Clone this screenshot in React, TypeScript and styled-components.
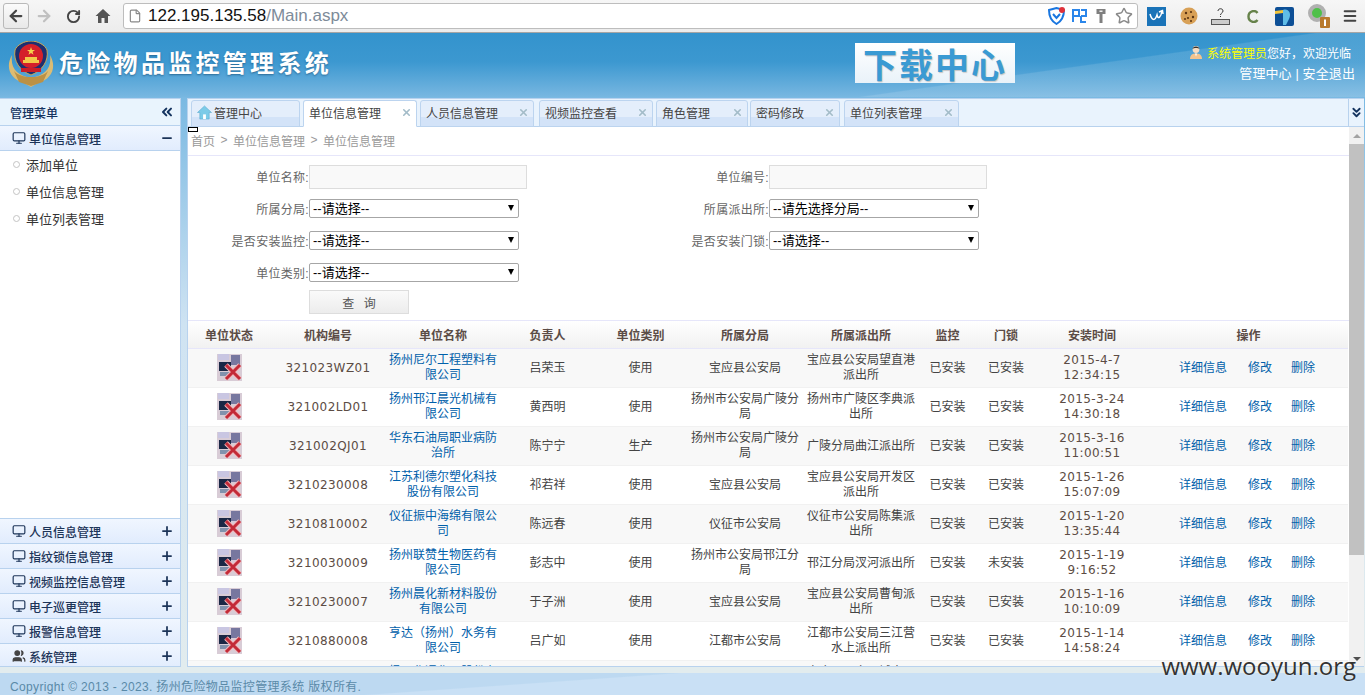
//#########
// Imports
//#########
import * as React from 'react';

import styled, { createGlobalStyle } from 'styled-components';
import {
  ArrowLeft,
  ArrowRight,
  ChevronsDown,
  ChevronsLeft,
  File,
  Menu,
  Minus,
  Monitor,
  Plus,
  RotateCw,
  Star,
  Users,
  X,
} from 'lucide-react';

//#######
// Style
//#######
const GlobalStyle = createGlobalStyle`
  html, body {
    margin: 0;
    padding: 0;
    height: 100%;
    overflow: hidden;
    font-family: "Liberation Sans", "Noto Sans CJK SC", sans-serif;
    font-size: 12px;
    color: #333;
  }
`;

const Page = styled.div`
  position: relative;
  width: 1365px;
  height: 695px;
  display: flex;
  flex-direction: column;
  overflow: hidden;
`;

const BrowserBar = styled.div`
  height: 32px;
  display: flex;
  align-items: center;
  background: linear-gradient(#f6f6f6, #ececec);
  border-bottom: 1px solid #a5a5a5;
  flex: none;
`;

const NavButton = styled.div<{ $boxed?: boolean; $width?: number }>`
  width: ${(props) => props.$width ?? 30}px;
  height: 26px;
  display: flex;
  align-items: center;
  justify-content: center;
  box-sizing: border-box;
  margin-left: ${(props) => (props.$boxed ? 3 : 0)}px;
  border: ${(props) => (props.$boxed ? '1px solid #b9b9b9' : 'none')};
  border-radius: 3px;
  background: ${(props) => (props.$boxed ? 'linear-gradient(#fbfbfb, #e8e8e8)' : 'none')};
`;

const AddressBar = styled.div`
  width: 1015px;
  height: 26px;
  margin-left: 4px;
  padding: 0 4px;
  box-sizing: border-box;
  display: flex;
  align-items: center;
  background: #fff;
  border: 1px solid #bdbdbd;
  border-radius: 3px;
  flex: none;
`;

const UrlHost = styled.span`
  margin-left: 6px;
  font-size: 17px;
  color: #111;
`;

const UrlPath = styled.span`
  font-size: 17px;
  color: #7d8b99;
  flex: 1;
`;

const AddressIcons = styled.div`
  display: flex;
  align-items: center;
  gap: 7px;
`;

const Extensions = styled.div`
  display: flex;
  align-items: center;
  margin-left: 9px;
`;

const ExtensionSlot = styled.div<{ $width: number }>`
  width: ${(props) => props.$width}px;
  display: flex;
  align-items: center;
`;

const TopHeader = styled.header`
  height: 64px;
  flex: none;
  display: flex;
  background:
    linear-gradient(172deg, transparent 72%, rgba(255, 255, 255, 0.12) 72.5%),
    linear-gradient(#3393cd, #3c98d0 45%, #78b7e1);
`;

const Brand = styled.div`
  width: 855px;
  display: flex;
  align-items: center;
  padding: 0 0 3px 8px;
  box-sizing: border-box;
  flex: none;
`;

const BrandTitle = styled.h1`
  margin: 0 0 4px 5px;
  color: #fff;
  font-size: 24px;
  font-weight: 700;
  letter-spacing: 3.3px;
  text-shadow: 0 1px 2px rgba(20, 70, 110, 0.6);
`;

const DownloadBox = styled.div`
  width: 160px;
  height: 40px;
  margin-top: 10px;
  display: flex;
  align-items: center;
  justify-content: center;
  background: linear-gradient(#fff, #e9f2f9);
  color: #3a9ad3;
  font-size: 34px;
  font-weight: 700;
  letter-spacing: 2px;
  text-shadow: 1px 1px 1px #c5c5c5;
  flex: none;
`;

const UserBox = styled.div`
  margin-left: auto;
  padding: 11px 10px 0 0;
  color: #fff;
  text-align: right;
`;

const Greeting = styled.div`
  display: flex;
  align-items: center;
  justify-content: flex-end;
  gap: 4px;
  padding-right: 4px;
  height: 16px;
`;

const Admin = styled.span`
  color: #ff0;
`;

const UserLinks = styled.div`
  margin-top: 3px;
  font-size: 13px;
  letter-spacing: 0.1px;
`;

const Main = styled.div`
  height: 570px;
  flex: none;
  display: flex;
  background: linear-gradient(#7ab9e2, #cfe3f2 40%, #e2ecee);
  padding-top: 1px;
  box-sizing: border-box;
`;

const Sidebar = styled.aside`
  width: 181px;
  flex: none;
  display: flex;
  flex-direction: column;
  overflow: hidden;
  box-sizing: border-box;
  background: #fff;
  border: 1px solid #b8d2ee;
  border-left: none;
`;

const SideTitle = styled.div`
  height: 26px;
  flex: none;
  display: flex;
  align-items: center;
  justify-content: space-between;
  padding: 0 5px 0 10px;
  background: #e9f4fd;
  color: #14335f;
  font-weight: 500;
  border-bottom: 1px solid #b8d2ee;
`;

const SideHead = styled.div`
  height: 25px;
  flex: none;
  box-sizing: border-box;
  display: flex;
  align-items: center;
  padding: 0 6px 0 12px;
  gap: 3px;
  background: linear-gradient(#f0f6ff, #e1ecfd);
  border-bottom: 1px solid #b8d2ee;
  color: #1c3458;
  font-weight: 500;
`;

const SideHeadText = styled.span`
  flex: 1;
`;

const SideList = styled.ul`
  height: 368px;
  flex: none;
  margin: 0;
  padding: 0;
  list-style: none;
  box-sizing: border-box;
  border-bottom: 1px solid #b8d2ee;
`;

const SideItem = styled.li`
  height: 27px;
  display: flex;
  align-items: center;
  padding-left: 13px;
  gap: 6px;
  font-size: 13px;
  color: #333;
`;

const Bullet = styled.i`
  width: 5px;
  height: 5px;
  border: 1px solid #c4c4c4;
  border-radius: 50%;
`;

const Content = styled.section`
  position: relative;
  width: 1177px;
  margin-left: 6px;
  flex: none;
  display: flex;
  flex-direction: column;
  overflow: hidden;
  box-sizing: border-box;
  background: #fff;
  border-left: 1px solid #b8d2ee;
  border-bottom: 1px solid #b8d2ee;
`;

const FocusMark = styled.i`
  position: absolute;
  left: 0;
  top: 29px;
  width: 8px;
  height: 3px;
  background: #fff;
  border: 1px solid #000;
`;

const TabBar = styled.div`
  height: 29px;
  flex: none;
  box-sizing: border-box;
  display: flex;
  align-items: flex-end;
  background: #e9f3fd;
  border-top: 1px solid #b8d2ee;
  border-bottom: 1px solid #b8d2ee;
  padding-left: 3px;
`;

const Tab = styled.div<{ $active?: boolean; $width: number; $gap?: number }>`
  position: relative;
  top: 1px;
  width: ${(props) => props.$width}px;
  margin-right: ${(props) => props.$gap ?? 3}px;
  height: 27px;
  box-sizing: border-box;
  display: flex;
  align-items: center;
  padding: 0 4px 2px 5px;
  gap: 2px;
  color: #444;
  background: ${(props) =>
    props.$active ? '#fff' : 'linear-gradient(#e4eefb 62%, #d3e3f8 62%)'};
  border: 1px solid #bcd4ef;
  border-bottom-color: ${(props) => (props.$active ? '#fff' : '#bcd4ef')};
  border-radius: 3px 3px 0 0;
`;

const TabText = styled.span`
  flex: 1;
`;

const TabCollapse = styled.div`
  margin-left: auto;
  align-self: stretch;
  width: 15px;
  display: flex;
  align-items: center;
  justify-content: center;
  border-left: 1px solid #b8d2ee;
  color: #14335f;
`;

const Body = styled.div`
  flex: 1;
  min-height: 0;
  display: flex;
`;

const Scroller = styled.div`
  flex: 1;
  min-width: 0;
  overflow: hidden;
`;

const ScrollTrack = styled.div`
  width: 15px;
  flex: none;
  display: flex;
  flex-direction: column;
  background: #f1f1f1;
`;

const ScrollArrow = styled.div<{ $down?: boolean }>`
  height: ${(props) => (props.$down ? 14 : 17)}px;
  margin-top: ${(props) => (props.$down ? 'auto' : 0)};
  flex: none;
  display: flex;
  align-items: center;
  justify-content: center;
  &::before {
    content: '';
    border-left: 4px solid transparent;
    border-right: 4px solid transparent;
    border-top: ${(props) => (props.$down ? '4px solid #505050' : 'none')};
    border-bottom: ${(props) => (props.$down ? 'none' : '4px solid #a3a3a3')};
  }
`;

const ScrollThumb = styled.div`
  height: 411px;
  background: #c1c1c1;
`;

const Breadcrumb = styled.div`
  height: 29px;
  box-sizing: border-box;
  display: flex;
  align-items: center;
  gap: 5px;
  padding: 0 0 2px 3px;
  color: #999;
  border-bottom: 1px solid #e6e6fa;
`;

const CrumbArrow = styled.span`
  width: 8px;
  text-align: center;
`;

const SearchForm = styled.form`
  display: grid;
  grid-template-columns: 121px 339px 121px 1fr;
  grid-auto-rows: 32px;
  padding-top: 4px;
  height: 165px;
  box-sizing: border-box;
  border-bottom: 1px solid #e6e6fa;
  align-items: center;
`;

const FieldLabel = styled.label`
  text-align: right;
  color: #666;
  letter-spacing: 0.3px;
`;

const TextInput = styled.input`
  width: 218px;
  height: 24px;
  margin-top: 2px;
  box-sizing: border-box;
  background: #f9f9f9;
  border: 1px solid #ddd;
`;

const SelectBox = styled.div`
  position: relative;
  width: 210px;
  height: 19px;
  &::after {
    content: '';
    position: absolute;
    right: 5px;
    top: 6px;
    border-left: 3.5px solid transparent;
    border-right: 3.5px solid transparent;
    border-top: 6px solid #000;
    pointer-events: none;
  }
`;

const NativeSelect = styled.select`
  appearance: none;
  width: 100%;
  height: 100%;
  box-sizing: border-box;
  padding: 0 0 0 3px;
  background: #fff;
  border: 1px solid #a6a6a6;
  border-radius: 2px;
  font-family: inherit;
  font-size: 13px;
  color: #000;
`;

const QueryButton = styled.button`
  grid-column: 2;
  align-self: start;
  width: 100px;
  height: 24px;
  margin-top: 2px;
  background: linear-gradient(#fafafa, #ececec);
  border: 1px solid #ddd;
  color: #555;
  font-family: inherit;
  font-size: 12px;
  word-spacing: 6px;
`;

const Grid = styled.table`
  width: 1160px;
  table-layout: fixed;
  border-collapse: collapse;
  text-align: center;
`;

const HeadCell = styled.th`
  height: 27px;
  padding: 0;
  font-weight: 700;
  font-size: 12px;
  color: #5b4c46;
  background: linear-gradient(#fff, #f1f1f1);
  border-bottom: 1px solid #e6e6fa;
`;

const Row = styled.tr<{ $shade: boolean }>`
  height: 39px;
  background: ${(props) => (props.$shade ? '#f8f8f8' : '#fff')};
  border-bottom: 1px solid #f1f1f1;
`;

const Cell = styled.td`
  padding: 0 3px;
  line-height: 15px;
  color: #444;
`;

const StatusCell = styled(Cell)`
  padding: 0 0 2px;
  svg {
    display: block;
    margin: 0 auto;
  }
`;

const Code = styled.span`
  font-family: "DejaVu Sans", sans-serif;
  letter-spacing: 0.4px;
  color: #5c4c44;
`;

const NameLink = styled.a`
  color: #0060aa;
`;

const Actions = styled.div`
  display: flex;
  padding-left: 27px;
`;

const ActionLink = styled.a<{ $width: number }>`
  width: ${(props) => props.$width}px;
  text-align: left;
  color: #0060aa;
`;

const FooterGap = styled.div`
  height: 6px;
  flex: none;
  background: #e2ecee;
`;

const Footer = styled.footer`
  flex: 1;
  display: flex;
  align-items: center;
  padding: 2px 0 0 10px;
  color: #5a8aa8;
  letter-spacing: 0.35px;
  background: linear-gradient(176deg, #bdd9f1 40%, #c9e0f5 41%);
`;

const Watermark = styled.div`
  position: absolute;
  right: 9px;
  bottom: 14px;
  font-family: "Open Sans", sans-serif;
  font-size: 24px;
  line-height: 30px;
  color: #333;
  text-shadow: 0 0 2px rgba(255, 255, 255, 0.7);
`;

//#############################################################
// Constants, Variables & Functions defined outside components
//#############################################################
const COLUMNS = [
  { title: '单位状态', width: 82 },
  { title: '机构编号', width: 116 },
  { title: '单位名称', width: 114 },
  { title: '负责人', width: 95 },
  { title: '单位类别', width: 91 },
  { title: '所属分局', width: 118 },
  { title: '所属派出所', width: 114 },
  { title: '监控', width: 59 },
  { title: '门锁', width: 58 },
  { title: '安装时间', width: 114 },
  { title: '操作', width: 199 },
];

const TABS = [
  { title: '单位信息管理', width: 114 },
  { title: '人员信息管理', width: 114, gap: 5 },
  { title: '视频监控查看', width: 114 },
  { title: '角色管理', width: 92, gap: 2 },
  { title: '密码修改', width: 90, gap: 4 },
  { title: '单位列表管理', width: 115 },
];

const UNITS = [
  ['321023WZ01', '扬州尼尔工程塑料有限公司', '吕荣玉', '使用', '宝应县公安局', '宝应县公安局望直港派出所', '已安装', '已安装', '2015-4-7', '12:34:15'],
  ['321002LD01', '扬州邗江晨光机械有限公司', '黄西明', '使用', '扬州市公安局广陵分局', '扬州市广陵区李典派出所', '已安装', '已安装', '2015-3-24', '14:30:18'],
  ['321002QJ01', '华东石油局职业病防治所', '陈宁宁', '生产', '扬州市公安局广陵分局', '广陵分局曲江派出所', '已安装', '已安装', '2015-3-16', '11:00:51'],
  ['3210230008', '江苏利德尔塑化科技股份有限公司', '祁若祥', '使用', '宝应县公安局', '宝应县公安局开发区派出所', '已安装', '已安装', '2015-1-26', '15:07:09'],
  ['3210810002', '仪征振中海绵有限公司', '陈远春', '使用', '仪征市公安局', '仪征市公安局陈集派出所', '已安装', '已安装', '2015-1-20', '13:35:44'],
  ['3210030009', '扬州联赞生物医药有限公司', '彭志中', '使用', '扬州市公安局邗江分局', '邗江分局汊河派出所', '已安装', '未安装', '2015-1-19', '9:16:52'],
  ['3210230007', '扬州晨化新材料股份有限公司', '于子洲', '使用', '宝应县公安局', '宝应县公安局曹甸派出所', '已安装', '已安装', '2015-1-16', '10:10:09'],
  ['3210880008', '亨达（扬州）水务有限公司', '吕广如', '使用', '江都市公安局', '江都市公安局三江营水上派出所', '已安装', '已安装', '2015-1-14', '14:58:24'],
  ['3210230006', '扬州华通化工股份有限公司', '', '', '', '宝应县公安局城中派出所', '', '', '', ''],
];

const HomeIcon = ({ size = 16, fill = '#555' }: { size?: number; fill?: string }) => (
  <svg width={size} height={size} viewBox="0 0 16 16">
    <path d="M8 1 L15.5 8 L13 8 L13 15 L9.5 15 L9.5 10 L6.5 10 L6.5 15 L3 15 L3 8 L.5 8 Z" fill={fill} />
  </svg>
);

const Emblem = () => (
  <svg width="46" height="46" viewBox="0 0 46 46">
    <path d="M4 14 C-3 26 2 38 16 42 L23 46 L30 42 C44 38 49 26 42 14 C44 28 36 35 23 37 C10 35 2 28 4 14 Z" fill="#dcbc74" />
    <path d="M6 30 C13 38 33 38 40 30 L35 41 L23 45 L11 41 Z" fill="#bb9146" />
    <path d="M23 0 C30 0 37 4 39 9 C41 20 34 30 23 34 C12 30 5 20 7 9 C9 4 16 0 23 0 Z" fill="#1d2f70" stroke="#cda954" />
    <circle cx="23" cy="15" r="12" fill="#d4202a" />
    <path d="M23 6 l1 3 3 0 -2.4 1.8 .9 3 -2.5-1.8 -2.5 1.8 .9-3 -2.4-1.8 3 0 Z" fill="#f5d24c" />
    <path d="M15 19 h16 v3 h-16 Z M17 16 h12 v3 h-12 Z" fill="#f3c94a" />
    <rect x="13" y="27" width="20" height="4" fill="#c91e28" />
  </svg>
);

const UserIcon = () => (
  <svg width="14" height="14" viewBox="0 0 14 14">
    <circle cx="7" cy="4.5" r="3.4" fill="#f7ddc2" />
    <path d="M3.5 4 C3.5 .5 10.5 .5 10.5 4 C9 2.6 5 2.6 3.5 4 Z" fill="#333" />
    <path d="M1 14 C1 9.5 4 8.5 7 8.5 C10 8.5 13 9.500 13 14 Z" fill="#f2c48e" />
    <path d="M6 8.5 h2 l-1 3 Z" fill="#fff" />
  </svg>
);

const TabHomeIcon = () => (
  <svg width="15" height="15" viewBox="0 0 16 16">
    <path d="M8 1 L15.5 8 L13 8 L13 15 L3 15 L3 8 L.5 8 Z" fill="#7ccbe8" stroke="#58a9cf" strokeWidth=".6" />
    <rect x="6.5" y="10" width="3" height="5" fill="#fff" />
  </svg>
);

const StatusIcon = () => (
  <svg width="25" height="27" viewBox="0 0 25 27">
    <rect width="25" height="27" fill="#d8ccd6" />
    <rect x="1" y="0" width="11" height="6" fill="#c9c6e2" />
    <rect x="14" y="1" width="9" height="10" fill="#77779f" />
    <rect x="2" y="8" width="12" height="9" fill="#1a2745" />
    <rect x="3" y="18" width="11" height="4" fill="#8192ad" />
    <path d="M9 11 L23 25 M23 11 L9 25" stroke="#f0b8bd" strokeWidth="5" />
    <path d="M9 11 L23 25 M23 11 L9 25" stroke="#c32a37" strokeWidth="3" />
  </svg>
);

const ShieldIcon = () => (
  <svg width="17" height="18" viewBox="0 0 17 18">
    <path d="M1 3 L8.5 1 L16 3 C16 10 13 14.5 8.5 17 C4 14.5 1 10 1 3 Z" fill="none" stroke="#1976e0" strokeWidth="2" />
    <path d="M5 7 L8.5 11 L12 7" fill="none" stroke="#1976e0" strokeWidth="2" />
    <circle cx="14" cy="3" r="3" fill="#e0313a" />
  </svg>
);

const ReIcon = () => (
  <svg width="15" height="14" viewBox="0 0 15 14">
    <path d="M1 1 H7 V7 H1 Z M1 7 V13 M9 1 H14 V7 H9 M9 7 V13 H14" fill="none" stroke="#2b86ea" strokeWidth="2" />
  </svg>
);

const KeyIcon = () => (
  <svg width="14" height="16" viewBox="0 0 14 16">
    <path d="M2.5 1 H11.500 V6 H8.500 V15 H5.500 V6 H2.500 Z" fill="#7f7f7f" />
    <rect x="5.500" y="2.500" width="3" height="1.500" fill="#eee" />
  </svg>
);

const BlueTileIcon = () => (
  <svg width="19" height="19" viewBox="0 0 19 19">
    <rect width="19" height="19" fill="#1a73b8" />
    <path d="M3 7 C5 14 8 14 10 8 C11 13 14 10 15 4 M12 5 L15.5 3.5 L16 7" fill="none" stroke="#fff" strokeWidth="1.5" />
  </svg>
);

const CookieIcon = () => (
  <svg width="18" height="18" viewBox="0 0 18 18">
    <circle cx="9" cy="9" r="8.5" fill="#d8a056" />
    <circle cx="6" cy="6" r="1.2" fill="#5a3312" />
    <circle cx="11" cy="5" r="1.1" fill="#5a3312" />
    <circle cx="13" cy="10" r="1.2" fill="#5a3312" />
    <circle cx="8" cy="11" r="1.1" fill="#5a3312" />
    <circle cx="5" cy="12" r="1" fill="#5a3312" />
    <circle cx="11" cy="14" r="1" fill="#5a3312" />
  </svg>
);

const QuestionIcon = () => (
  <svg width="19" height="17" viewBox="0 0 19 17">
    <path d="M7 3 C7 0 12 0 12 3 C12 5 9.500 5 9.500 7" fill="none" stroke="#333" />
    <rect x="9" y="8" width="1" height="1" fill="#333" />
    <rect x=".5" y="11.500" width="18" height="5" fill="#ccc" stroke="#555" />
  </svg>
);

const LetterIcon = () => (
  <svg width="12" height="13" viewBox="0 0 12 13">
    <path d="M10.500 3 C8 -.5 1.500 1 1.500 6.500 C1.500 12 8 13.500 10.500 10" fill="none" stroke="#66824a" strokeWidth="2.400" />
  </svg>
);

const PenguinIcon = () => (
  <svg width="19" height="19" viewBox="0 0 19 19">
    <rect width="19" height="19" rx="2" fill="#0d4f96" />
    <path d="M8 3 C13 1 17 6 14 12 L11 18 L8 18 Z" fill="#5fbde8" />
    <path d="M0 4 L8 3 L8 6 L0 7 Z" fill="#f3c53b" />
  </svg>
);

const BadgeIcon = () => (
  <svg width="23" height="24" viewBox="0 0 23 24">
    <circle cx="9" cy="9" r="7" fill="#4fc04a" stroke="#b0b0b0" strokeWidth="4" />
    <rect x="12" y="13" width="10" height="11" rx="1" fill="#b97a2d" />
    <path d="M16 15.500 H18 V22 H16 Z" fill="#fff" />
  </svg>
);

//##########################
// Page sections
//##########################
const Browser = () => (
  <BrowserBar>
    <NavButton $boxed $width={26}><ArrowLeft size={18} strokeWidth={3} color="#444" /></NavButton>
    <NavButton $width={30}><ArrowRight size={18} strokeWidth={3} color="#c0c0c0" /></NavButton>
    <NavButton $width={28}><RotateCw size={15} strokeWidth={3} color="#444" /></NavButton>
    <NavButton $width={32}><HomeIcon /></NavButton>
    <AddressBar>
      <File size={14} color="#888" />
      <UrlHost>122.195.135.58</UrlHost>
      <UrlPath>/Main.aspx</UrlPath>
      <AddressIcons>
        <ShieldIcon />
        <ReIcon />
        <KeyIcon />
        <Star size={18} color="#8a8a8a" />
      </AddressIcons>
    </AddressBar>
    <Extensions>
      <ExtensionSlot $width={33}><BlueTileIcon /></ExtensionSlot>
      <ExtensionSlot $width={31}><CookieIcon /></ExtensionSlot>
      <ExtensionSlot $width={36}><QuestionIcon /></ExtensionSlot>
      <ExtensionSlot $width={28}><LetterIcon /></ExtensionSlot>
      <ExtensionSlot $width={33}><PenguinIcon /></ExtensionSlot>
      <ExtensionSlot $width={34}><BadgeIcon /></ExtensionSlot>
      <ExtensionSlot $width={16}><Menu size={16} strokeWidth={3} color="#444" /></ExtensionSlot>
    </Extensions>
  </BrowserBar>
);

const Header = () => (
  <TopHeader>
    <Brand>
      <Emblem />
      <BrandTitle>危险物品监控管理系统</BrandTitle>
    </Brand>
    <DownloadBox>下载中心</DownloadBox>
    <UserBox>
      <Greeting>
        <UserIcon />
        <span><Admin>系统管理员</Admin>您好，欢迎光临</span>
      </Greeting>
      <UserLinks>管理中心 | 安全退出</UserLinks>
    </UserBox>
  </TopHeader>
);

const Menus = () => (
  <Sidebar>
    <SideTitle>
      管理菜单
      <ChevronsLeft size={16} strokeWidth={3} />
    </SideTitle>
    <SideHead>
      <Monitor size={14} />
      <SideHeadText>单位信息管理</SideHeadText>
      <Minus size={14} strokeWidth={3} />
    </SideHead>
    <SideList>
      {['添加单位', '单位信息管理', '单位列表管理'].map((item) => (
        <SideItem key={item}>
          <Bullet />
          {item}
        </SideItem>
      ))}
    </SideList>
    {['人员信息管理', '指纹锁信息管理', '视频监控信息管理', '电子巡更管理', '报警信息管理', '系统管理'].map((item) => (
      <SideHead key={item}>
        {item === '系统管理' ? <Users size={14} fill="#444" color="#444" /> : <Monitor size={14} />}
        <SideHeadText>{item}</SideHeadText>
        <Plus size={14} strokeWidth={3} />
      </SideHead>
    ))}
  </Sidebar>
);

const Tabs = () => (
  <TabBar>
    <Tab $width={109}>
      <TabHomeIcon />
      <TabText>管理中心</TabText>
    </Tab>
    {TABS.map((tab, index) => (
      <Tab key={tab.title} $width={tab.width} $gap={tab.gap} $active={index === 0}>
        <TabText>{tab.title}</TabText>
        <X size={11} strokeWidth={3.5} color="#a3bcc8" />
      </Tab>
    ))}
    <TabCollapse><ChevronsDown size={15} strokeWidth={3} /></TabCollapse>
  </TabBar>
);

const Select = ({ label }: { label: string }) => (
  <SelectBox>
    <NativeSelect defaultValue={label}>
      <option>{label}</option>
    </NativeSelect>
  </SelectBox>
);

const Search = () => (
  <SearchForm>
    <FieldLabel>单位名称:</FieldLabel>
    <TextInput />
    <FieldLabel>单位编号:</FieldLabel>
    <TextInput />
    <FieldLabel>所属分局:</FieldLabel>
    <Select label="--请选择--" />
    <FieldLabel>所属派出所:</FieldLabel>
    <Select label="--请先选择分局--" />
    <FieldLabel>是否安装监控:</FieldLabel>
    <Select label="--请选择--" />
    <FieldLabel>是否安装门锁:</FieldLabel>
    <Select label="--请选择--" />
    <FieldLabel>单位类别:</FieldLabel>
    <Select label="--请选择--" />
    <span />
    <span />
    <QueryButton type="button">查 询</QueryButton>
  </SearchForm>
);

const UnitTable = () => (
  <Grid>
    <colgroup>
      {COLUMNS.map((column) => (
        <col key={column.title} width={column.width} />
      ))}
    </colgroup>
    <thead>
      <tr>
        {COLUMNS.map((column) => (
          <HeadCell key={column.title}>{column.title}</HeadCell>
        ))}
      </tr>
    </thead>
    <tbody>
      {UNITS.map((unit, index) => (
        <Row key={unit[0]} $shade={index % 2 === 0}>
          <StatusCell><StatusIcon /></StatusCell>
          <Cell><Code>{unit[0]}</Code></Cell>
          <Cell><NameLink>{unit[1]}</NameLink></Cell>
          <Cell>{unit[2]}</Cell>
          <Cell>{unit[3]}</Cell>
          <Cell>{unit[4]}</Cell>
          <Cell>{unit[5]}</Cell>
          <Cell>{unit[6]}</Cell>
          <Cell>{unit[7]}</Cell>
          <Cell>
            <Code>{unit[8]}<br />{unit[9]}</Code>
          </Cell>
          <Cell>
            <Actions>
              <ActionLink $width={69}>详细信息</ActionLink>
              <ActionLink $width={43}>修改</ActionLink>
              <ActionLink $width={30}>删除</ActionLink>
            </Actions>
          </Cell>
        </Row>
      ))}
    </tbody>
  </Grid>
);

//###############
// App component
//###############
const App = () => (
  <Page>
    <GlobalStyle />
    <Browser />
    <Header />
    <Main>
      <Menus />
      <Content>
        <Tabs />
        <FocusMark />
        <Body>
          <Scroller>
            <Breadcrumb>首页 <CrumbArrow>&gt;</CrumbArrow> 单位信息管理 <CrumbArrow>&gt;</CrumbArrow> 单位信息管理</Breadcrumb>
            <Search />
            <UnitTable />
          </Scroller>
          <ScrollTrack>
            <ScrollArrow />
            <ScrollThumb />
            <ScrollArrow $down />
          </ScrollTrack>
        </Body>
      </Content>
    </Main>
    <FooterGap />
    <Footer>Copyright © 2013 - 2023. 扬州危险物品监控管理系统 版权所有.</Footer>
    <Watermark>www.wooyun.org</Watermark>
  </Page>
);

export default App;
